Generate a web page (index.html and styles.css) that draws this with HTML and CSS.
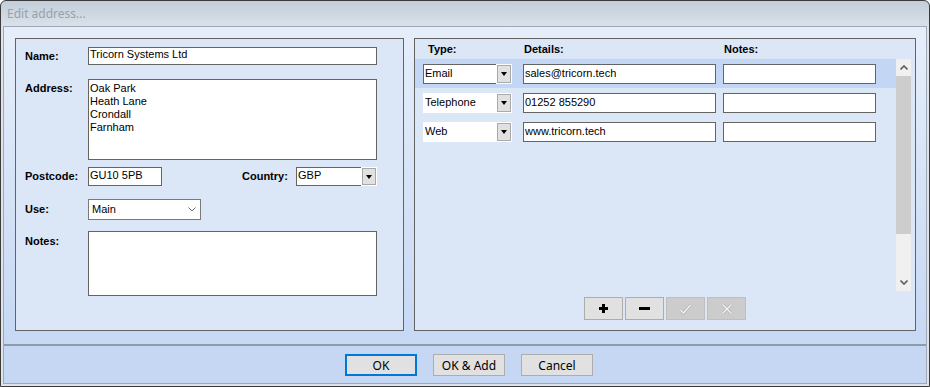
FILE: index.html
```html
<!DOCTYPE html>
<html lang="en">
<head>
  <meta charset="UTF-8">
  <title>Edit address...</title>
  <link rel="stylesheet" href="styles.css">
</head>
<body>
  <div class="window">
    <div class="titlebar">Edit address...</div>

    <div class="frame">
      <div class="main">

        <!-- address details -->
        <div class="panel panel-left">
          <div class="form-row">
            <div class="label">Name:</div>
            <div class="box box-name">Tricorn Systems Ltd</div>
          </div>

          <div class="form-row top row-address">
            <div class="label">Address:</div>
            <div class="box box-address">Oak Park<br>Heath Lane<br>Crondall<br>Farnham</div>
          </div>

          <div class="form-row row-postcode">
            <div class="label">Postcode:</div>
            <div class="box box-postcode">GU10 5PB</div>
            <div class="label label-country">Country:</div>
            <div class="combo-old">
              <div class="combo-old-field">GBP</div>
              <div class="drop-btn"><span class="tri"></span></div>
            </div>
          </div>

          <div class="form-row row-use">
            <div class="label">Use:</div>
            <div class="combo-new">
              <span>Main</span>
              <svg class="chev" width="8" height="5" viewBox="0 0 8 5"><polyline points="0.5,0.5 4,4 7.5,0.5" fill="none" stroke="#6d6d6d" stroke-width="1"/></svg>
            </div>
          </div>

          <div class="form-row top row-notes">
            <div class="label">Notes:</div>
            <div class="box box-notes"></div>
          </div>
        </div>

        <!-- contact methods -->
        <div class="panel panel-right">
          <div class="grid-head">
            <span class="head-type">Type:</span>
            <span class="head-details">Details:</span>
            <span>Notes:</span>
          </div>

          <div class="list-area">
            <div class="list">
              <div class="list-row selected">
                <div class="type-combo focused">
                  <div class="type-field">Email</div>
                  <div class="drop-btn"><span class="tri"></span></div>
                </div>
                <div class="box row-box box-details">sales@tricorn.tech</div>
                <div class="box row-box box-rnotes"></div>
              </div>
              <div class="list-row">
                <div class="type-combo">
                  <div class="type-field">Telephone</div>
                  <div class="drop-btn"><span class="tri"></span></div>
                </div>
                <div class="box row-box box-details">01252 855290</div>
                <div class="box row-box box-rnotes"></div>
              </div>
              <div class="list-row">
                <div class="type-combo">
                  <div class="type-field">Web</div>
                  <div class="drop-btn"><span class="tri"></span></div>
                </div>
                <div class="box row-box box-details">www.tricorn.tech</div>
                <div class="box row-box box-rnotes"></div>
              </div>
            </div>

            <div class="scrollbar">
              <div class="sb-arrow">
                <svg width="8" height="5" viewBox="0 0 8 5"><polyline points="0.5,4.5 4,1 7.5,4.5" fill="none" stroke="#606060" stroke-width="1.6"/></svg>
              </div>
              <div class="sb-thumb"></div>
              <div class="sb-track"></div>
              <div class="sb-arrow">
                <svg width="8" height="5" viewBox="0 0 8 5"><polyline points="0.5,0.5 4,4 7.5,0.5" fill="none" stroke="#606060" stroke-width="1.6"/></svg>
              </div>
            </div>
          </div>

          <div class="toolbar">
            <div class="tool-btn">
              <svg width="9" height="9" viewBox="0 0 9 9"><rect x="3" y="0" width="3" height="9" fill="#000"/><rect x="0" y="3" width="9" height="3" fill="#000"/></svg>
            </div>
            <div class="tool-btn">
              <svg width="11" height="3" viewBox="0 0 11 3"><rect x="0" y="0" width="11" height="3" fill="#000"/></svg>
            </div>
            <div class="tool-btn disabled">
              <svg width="13" height="12" viewBox="0 0 13 12"><path d="M1.5 7 L4.5 10 L11.5 2" fill="none" stroke="#b5b5b5" stroke-width="3"/><path d="M1.5 7 L4.5 10 L11.5 2" fill="none" stroke="#f6f6f6" stroke-width="1.2"/></svg>
            </div>
            <div class="tool-btn disabled">
              <svg width="12" height="12" viewBox="0 0 12 12"><path d="M1.5 1.5 L10.5 10.5 M10.5 1.5 L1.5 10.5" fill="none" stroke="#b5b5b5" stroke-width="3"/><path d="M1.5 1.5 L10.5 10.5 M10.5 1.5 L1.5 10.5" fill="none" stroke="#f6f6f6" stroke-width="1.2"/></svg>
            </div>
          </div>
        </div>

      </div>

      <div class="footer">
        <div class="btn btn-default">OK</div>
        <div class="btn">OK &amp; Add</div>
        <div class="btn">Cancel</div>
      </div>
    </div>
  </div>
</body>
</html>
```

FILE: styles.css
```css
* {
  box-sizing: border-box;
}

body {
  margin: 0;
  width: 930px;
  height: 387px;
  overflow: hidden;
  font-family: "Liberation Sans", Arial, sans-serif;
  font-size: 11px;
  color: #000;
  background: #fff;
}

.window {
  width: 930px;
  height: 387px;
  border: 1px solid #3c3c3c;
  border-radius: 6px 6px 0 0;
  background: linear-gradient(to bottom, #c3ceda 0, #d9e1e9 25px, #dde4ec 26px, #dde4ec 100%);
  display: flex;
  flex-direction: column;
}

.titlebar {
  height: 25px;
  padding: 4px 0 0 6px;
  font-family: "Noto Sans", sans-serif;
  font-size: 12px;
  line-height: 17px;
  color: #98a1ab;
}

.frame {
  flex: 1;
  margin: 0 2px 2px;
  border: 1px solid #9fa9b5;
  display: flex;
  flex-direction: column;
}

.main {
  flex: 1;
  display: flex;
  align-items: flex-start;
  gap: 10px;
  padding: 11px 10px 0 11px;
  background: linear-gradient(to bottom, #e6eefa, #c6d8f4);
}

.panel {
  height: 293px;
  border: 1px solid #646464;
  background: #dbe6f7;
}

/* left panel form */

.panel-left {
  width: 389px;
  padding: 8px 0 0 9px;
}

.form-row {
  display: flex;
  align-items: center;
}

.form-row.top {
  align-items: flex-start;
}

.label {
  width: 63px;
  font-weight: bold;
  line-height: 13px;
}

.top .label {
  padding-top: 3px;
}

.row-notes .label {
  padding-top: 4px;
}

.box {
  background: #fff;
  border: 1px solid #646464;
  line-height: 13px;
  padding-left: 1px;
  display: flex;
  align-items: center;
  white-space: nowrap;
}

.box-name {
  width: 289px;
  height: 18px;
  padding-bottom: 4px;
}

.row-address {
  margin-top: 14px;
}

.box-address {
  display: block;
  width: 289px;
  height: 81px;
  padding-top: 2px;
}

.row-postcode {
  margin-top: 7px;
}

.box-postcode {
  width: 74px;
  height: 19px;
  padding-bottom: 2px;
}

.label-country {
  width: 54px;
  margin-left: 80px;
}

.combo-old {
  display: flex;
  width: 81px;
  height: 19px;
}

.combo-old-field {
  flex: 1;
  background: #fff;
  border: 1px solid #646464;
  border-right: none;
  padding: 0 0 2px 1px;
  line-height: 13px;
  display: flex;
  align-items: center;
}

.drop-btn {
  width: 16px;
  height: 100%;
  background: #e1e1e1;
  border: 1px solid #fff;
  box-shadow: inset 0 0 0 1px #a9a9a9;
  display: flex;
  align-items: center;
  justify-content: center;
}

.tri {
  width: 0;
  height: 0;
  border-left: 3.5px solid transparent;
  border-right: 3.5px solid transparent;
  border-top: 4px solid #000;
  margin-top: 1px;
}

.row-use {
  margin-top: 13px;
}

.combo-new {
  width: 113px;
  height: 21px;
  background: #fff;
  border: 1px solid #7a7a7a;
  padding: 0 4px 0 3px;
  display: flex;
  align-items: center;
  justify-content: space-between;
  line-height: 13px;
}

.row-notes {
  margin-top: 11px;
}

.box-notes {
  width: 289px;
  height: 65px;
}

/* right panel grid */

.panel-right {
  width: 502px;
  display: flex;
  flex-direction: column;
}

.grid-head {
  height: 20px;
  display: flex;
  align-items: center;
  padding-left: 13px;
  font-weight: bold;
  line-height: 13px;
}

.head-type {
  width: 96px;
}

.head-details {
  width: 200px;
}

.list-area {
  height: 232px;
  display: flex;
}

.list {
  width: 481px;
}

.list-row {
  height: 29px;
  display: flex;
  align-items: center;
  padding-left: 8px;
}

.list-row.selected {
  background: #c3d7f5;
}

.type-combo {
  display: flex;
  width: 89px;
  height: 20px;
  margin-right: 11px;
}

.type-field {
  flex: 1;
  background: #fff;
  padding-left: 2px;
  line-height: 13px;
  display: flex;
  align-items: center;
}

.type-combo.focused .type-field {
  border: 1px solid #646464;
  border-right: none;
  padding-left: 1px;
}

.row-box {
  height: 20px;
  padding-left: 1px;
}

.box-details {
  width: 193px;
  margin-right: 7px;
}

.box-rnotes {
  width: 153px;
}

.scrollbar {
  width: 15px;
  height: 232px;
  background: #f0f0f0;
  display: flex;
  flex-direction: column;
}

.sb-arrow {
  height: 17px;
  display: flex;
  align-items: center;
  justify-content: center;
}

.sb-thumb {
  height: 158px;
  background: #cdcdcd;
}

.sb-track {
  flex: 1;
}

.toolbar {
  margin-top: 6px;
  display: flex;
  justify-content: center;
  gap: 2px;
}

.tool-btn {
  width: 39px;
  height: 23px;
  background: #e1e1e1;
  border: 1px solid #adadad;
  display: flex;
  align-items: center;
  justify-content: center;
}

.tool-btn.disabled {
  background: #cccccc;
  border-color: #bfbfbf;
}

/* dialog buttons */

.footer {
  height: 39px;
  border-top: 2px solid #8e9bab;
  background: #c5d7f3;
  display: flex;
  justify-content: center;
  gap: 16px;
  padding: 8px 0 0 8px;
}

.btn {
  width: 72px;
  height: 22px;
  background: #e1e1e1;
  border: 1px solid #adadad;
  font-family: "Noto Sans", sans-serif;
  font-size: 12px;
  display: flex;
  align-items: center;
  justify-content: center;
}

.btn-default {
  border: 2px solid #0078d7;
}
```
